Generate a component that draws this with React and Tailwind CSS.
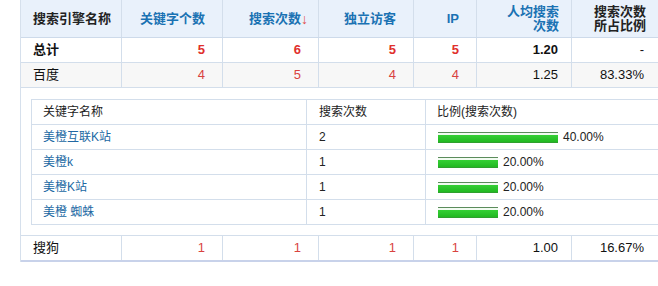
import React from "react";

const font = { fontFamily: '"Liberation Sans", Arial, "Noto Sans CJK SC", sans-serif' };

function Bar({ pct }) {
  return (
    <div className="flex items-center">
      <div className="flex flex-col h-[11px]" style={{ width: pct * 3 }}>
        <div className="h-px bg-[#5b8c5b]" />
        <div className="h-[2px] bg-[#f2fbf2]" />
        <div className="flex-1 bg-gradient-to-b from-[#35d035] to-[#22b822]" />
        <div className="h-px bg-[#2fa02f]" />
      </div>
      <span className="ml-[5px] text-[12px] text-[#222]">{pct.toFixed(2)}%</span>
    </div>
  );
}

const kw = [
  { name: "美橙互联K站", n: 2, p: 40 },
  { name: "美橙k", n: 1, p: 20 },
  { name: "美橙K站", n: 1, p: 20 },
  { name: "美橙 蜘蛛", n: 1, p: 20 },
];

function Row({ label, bold, bg, cells, h = "h-[25px]", last }) {
  const num = bold ? "font-bold text-[#e0302c]" : "text-[#d9433f]";
  return (
    <div className={`flex ${h} ${bg} ${last ? "border-b-2 border-[#c8d2ea]" : "border-b border-[#d3deeb]"} text-[13px]`}>
      <div className={`w-[100px] flex items-center pl-[12px] text-[#111] ${bold ? "font-bold" : ""}`}>{label}</div>
      <div className={`w-[101px] border-l border-[#d3deeb] flex items-center justify-end pr-[17px] ${num}`}>{cells[0]}</div>
      <div className={`w-[96px] border-l border-[#d3deeb] flex items-center justify-end pr-[17px] ${num}`}>{cells[1]}</div>
      <div className={`w-[95px] border-l border-[#d3deeb] flex items-center justify-end pr-[17px] ${num}`}>{cells[2]}</div>
      <div className={`w-[63px] border-l border-[#d3deeb] flex items-center justify-end pr-[17px] ${num}`}>{cells[3]}</div>
      <div className={`w-[95px] border-l border-[#d3deeb] flex items-center justify-end pr-[13px] text-[#111] ${bold ? "font-bold" : ""}`}>{cells[4]}</div>
      <div className="w-[89px] border-l border-[#d3deeb] flex items-center justify-end pr-[16px] text-[#111]">{cells[5]}</div>
    </div>
  );
}

export default function App() {
  const hb = "border-l border-[#d3deeb] flex items-center justify-end";
  return (
    <div className="w-[658px] h-[286px] overflow-hidden bg-white" style={font}>
      <div className="ml-[20px] w-[640px] border-l border-[#d6e0ec]">
        {/* header */}
        <div className="flex h-[38px] bg-[#e9f1fb] border-b border-[#cddaea] text-[13px] font-bold text-[#1a72b3] leading-[14px]">
          <div className="w-[100px] flex items-center pl-[12px] text-[#222]">搜索引擎名称</div>
          <div className={`w-[101px] ${hb} pr-[17px]`}>关键字个数</div>
          <div className={`w-[96px] ${hb} pr-[10px]`}>
            搜索次数<span className="text-[#e0504a] font-normal text-[14px]">↓</span>
          </div>
          <div className={`w-[95px] ${hb} pr-[17px]`}>独立访客</div>
          <div className={`w-[63px] ${hb} pr-[17px]`}>IP</div>
          <div className={`w-[95px] ${hb} pr-[12px] text-right`}>
            人均搜索<br />次数
          </div>
          <div className={`w-[89px] ${hb} pr-[14px] text-right text-[#222]`}>
            搜索次数<br />所占比例
          </div>
        </div>
        <Row label="总计" bold bg="bg-white" cells={["5", "6", "5", "5", "1.20", "-"]} />
        <Row label="百度" bg="bg-[#f7f7f7]" cells={["4", "5", "4", "4", "1.25", "83.33%"]} />
        {/* detail */}
        <div className="h-[148px] border-b border-[#d3deeb] pl-[10px] pt-[11px]">
          <div className="border-t border-l border-[#d3deeb] text-[12px] text-[#222] w-[700px]">
            <div className="flex h-[25px] border-b border-[#d3deeb]">
              <div className="w-[274px] flex items-center pl-[11px]">关键字名称</div>
              <div className="w-[119px] border-l border-[#d3deeb] flex items-center pl-[12px]">搜索次数</div>
              <div className="flex-1 border-l border-[#d3deeb] flex items-center pl-[11px]">比例(搜索次数)</div>
            </div>
            {kw.map((k, i) => (
              <div key={i} className="flex h-[25px] border-b border-[#d3deeb]">
                <div className="w-[274px] flex items-center pl-[11px] text-[#2168a3]">{k.name}</div>
                <div className="w-[119px] border-l border-[#d3deeb] flex items-center pl-[12px]">{k.n}</div>
                <div className="flex-1 border-l border-[#d3deeb] flex items-center pl-[12px]">
                  <Bar pct={k.p} />
                </div>
              </div>
            ))}
          </div>
        </div>
        <Row label="搜狗" bg="bg-white" h="h-[26px]" last cells={["1", "1", "1", "1", "1.00", "16.67%"]} />
      </div>
    </div>
  );
}
